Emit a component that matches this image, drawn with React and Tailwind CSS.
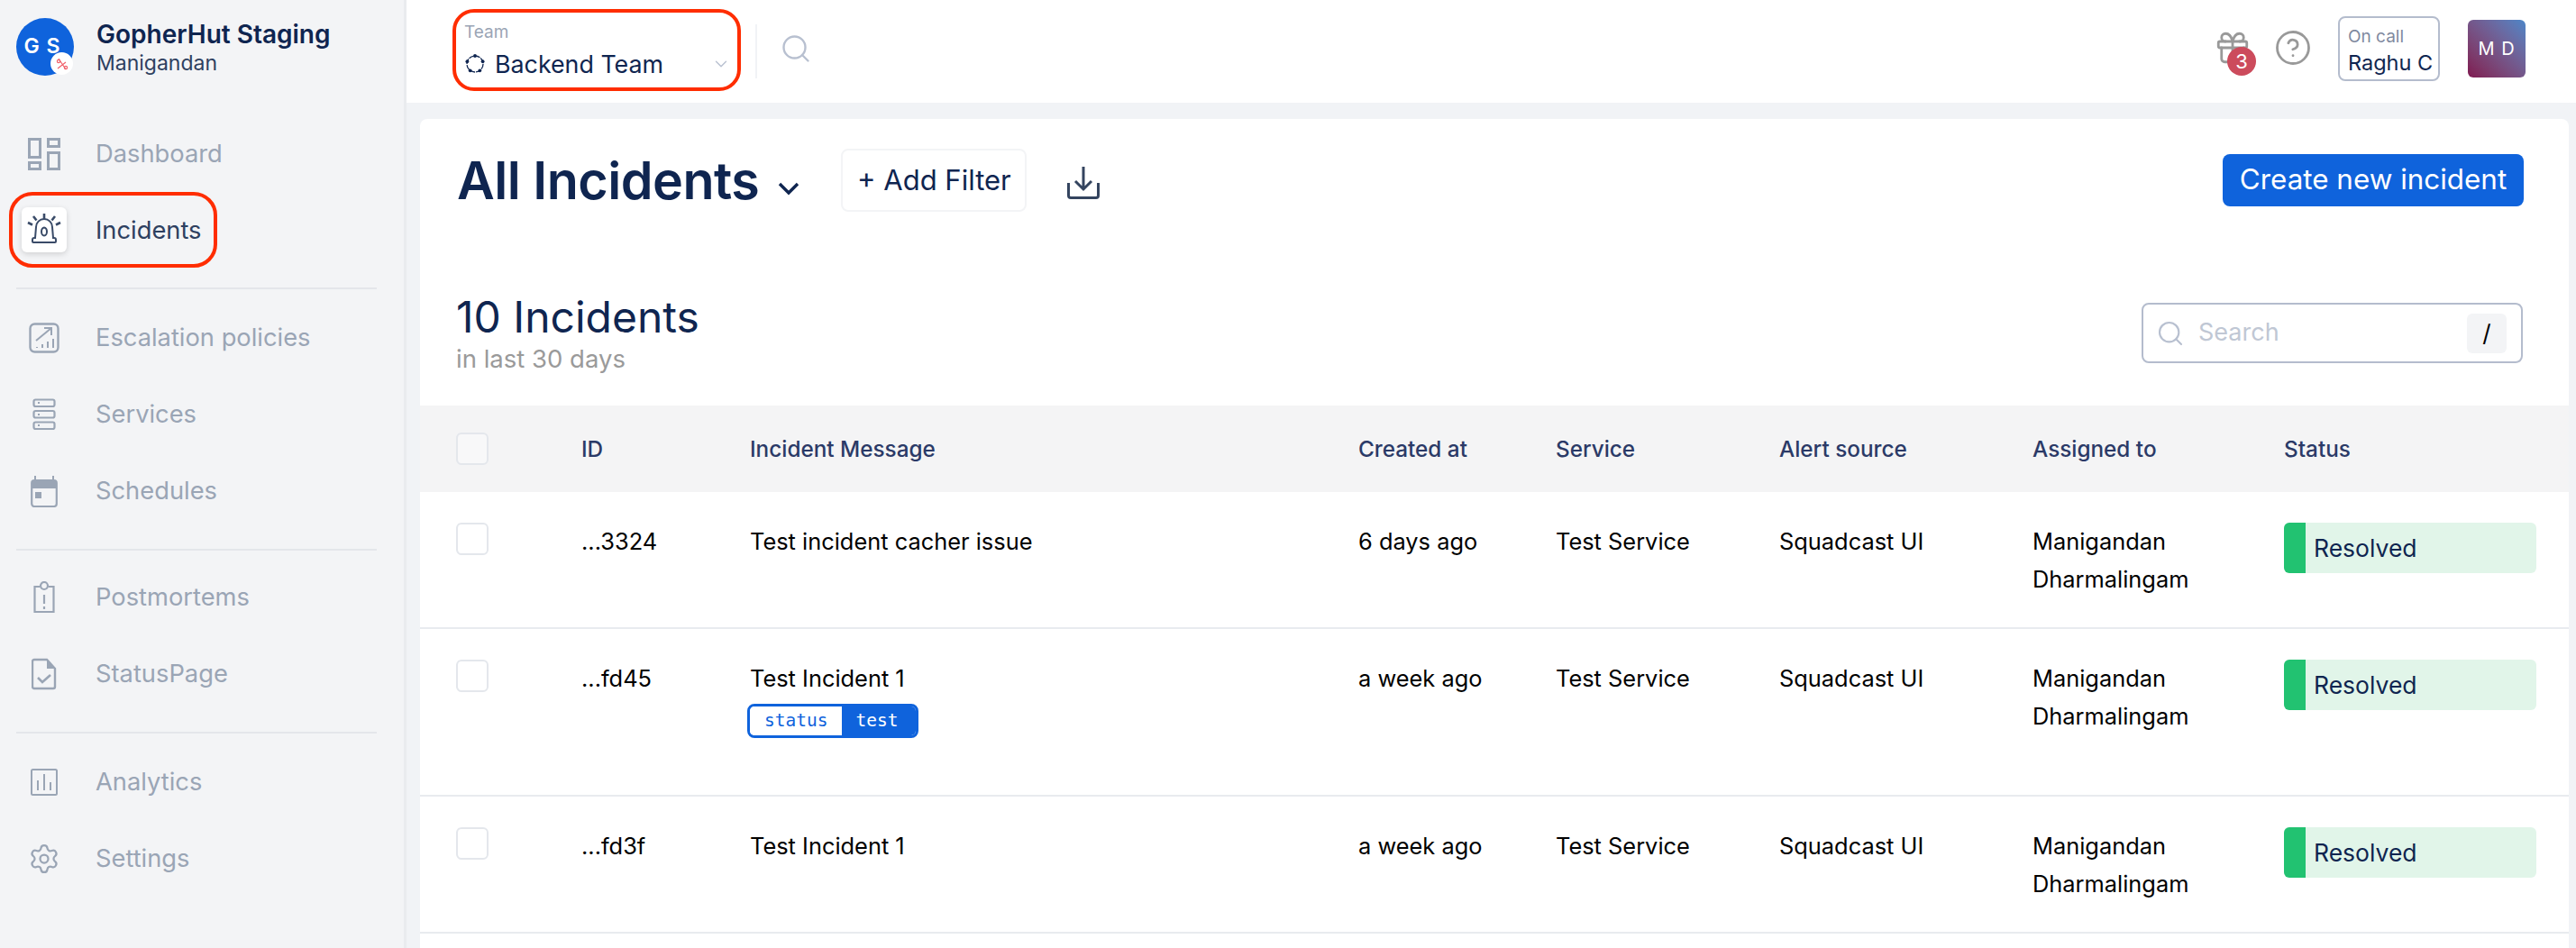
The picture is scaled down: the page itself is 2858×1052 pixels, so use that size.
import React from 'react';
import { Settings, Gift, CircleHelp, Search, ChevronDown } from 'lucide-react';

const DashboardIcon = () => (
  <svg width="38" height="38" viewBox="0 0 38 38" fill="none" stroke="#9aa5b5" strokeWidth="3">
    <rect x="2.5" y="2.5" width="12" height="20" />
    <rect x="23.5" y="2.5" width="12" height="8" />
    <rect x="2.5" y="28.5" width="12" height="7" />
    <rect x="23.5" y="17.5" width="12" height="18" />
  </svg>
);

const AlarmIcon = () => (
  <svg width="38" height="38" viewBox="0 0 38 38" fill="none" stroke="#3a4b68" strokeWidth="2">
    <path d="M7 33 h24 a1 1 0 0 0 1 -1 v-2 a2 2 0 0 0 -2 -2 h-1 l-1 -12 a9 9 0 0 0 -18 0 l-1 12 h-1 a2 2 0 0 0 -2 2 v2 a1 1 0 0 0 1 1 z" />
    <ellipse cx="19" cy="21" rx="3" ry="4.5" />
    <path d="M19 1v6M7 4l3.5 4.5M31 4l-3.5 4.5M1 11l5 2.5M37 11l-5 2.5" strokeWidth="2.6" />
  </svg>
);

const EscalationIcon = () => (
  <svg width="34" height="34" viewBox="0 0 34 34" fill="none" stroke="#9aa5b5" strokeWidth="2.4">
    <rect x="1.5" y="1.5" width="31" height="31" rx="5" />
    <path d="M8 20 L25 6 M17 6 h8 v8" strokeWidth="2" />
    <path d="M9 27v1M15 24v4M21 21v7M27 18v10" strokeWidth="2" />
  </svg>
);

const ServicesIcon = () => (
  <svg width="26" height="36" viewBox="0 0 26 36" fill="none" stroke="#9aa5b5" strokeWidth="2.2">
    <rect x="1.5" y="1.5" width="23" height="7.5" rx="2" />
    <rect x="1.5" y="14" width="23" height="7.5" rx="2" />
    <rect x="1.5" y="26.5" width="23" height="7.5" rx="2" />
    <path d="M6 5h2M6 18h2M6 30h2" />
  </svg>
);

const CalendarIcon = () => (
  <svg width="30" height="36" viewBox="0 0 30 36" fill="none">
    <path d="M5 1v6M25 1v6" stroke="#9aa5b5" strokeWidth="2" />
    <rect x="1.2" y="6" width="27.6" height="29" rx="3" stroke="#9aa5b5" strokeWidth="2.2" />
    <path d="M1 9a3 3 0 0 1 3 -3h22a3 3 0 0 1 3 3v6H1z" fill="#9aa5b5" />
    <rect x="5" y="19" width="7" height="7" fill="#9aa5b5" />
  </svg>
);

const PostmortemIcon = () => (
  <svg width="26" height="36" viewBox="0 0 26 36" fill="none" stroke="#9aa5b5" strokeWidth="2.2">
    <path d="M8 6H2.5v28h21V6H18" />
    <circle cx="13" cy="5" r="4" />
    <path d="M13 15v10M13 28v3" />
  </svg>
);

const StatusIcon = () => (
  <svg width="28" height="36" viewBox="0 0 28 36" fill="none">
    <path d="M3 2h14l9 10v20a2 2 0 0 1 -2 2H3a2 2 0 0 1 -2 -2V4a2 2 0 0 1 2 -2z" stroke="#9aa5b5" strokeWidth="2.4" />
    <path d="M17 2l9 10h-9z" fill="#9aa5b5" />
    <path d="M7 22l5 5 9 -8" stroke="#9aa5b5" strokeWidth="2.6" />
  </svg>
);

const AnalyticsIcon = () => (
  <svg width="30" height="30" viewBox="0 0 30 30" fill="none" stroke="#9aa5b5" strokeWidth="2">
    <rect x="1" y="1" width="28" height="28" rx="1.5" />
    <path d="M8 13v11M15 6v18M22 15v9" />
  </svg>
);

const TeamIcon = () => (
  <svg width="24" height="24" viewBox="0 0 24 24" fill="none" stroke="#0f2550" strokeWidth="1.3">
    <circle cx="12" cy="12" r="9" strokeDasharray="6 1" />
    <g fill="#0f2550" stroke="none">
      <circle cx="12" cy="3" r="1.9" />
      <circle cx="20.6" cy="9.2" r="1.9" />
      <circle cx="17.3" cy="19.3" r="1.9" />
      <circle cx="6.7" cy="19.3" r="1.9" />
      <circle cx="3.4" cy="9.2" r="1.9" />
    </g>
  </svg>
);

const DownloadIcon = () => (
  <svg width="36" height="36" viewBox="0 0 36 36" fill="none" stroke="#34445f" strokeWidth="3">
    <path d="M18 0v24M9 16l9 9 9 -9" />
    <path d="M1.5 18v14a2.5 2.5 0 0 0 2.5 2.5h28a2.5 2.5 0 0 0 2.5 -2.5V18" />
  </svg>
);

const navGroups = [
  [
    { label: 'Dashboard', icon: <DashboardIcon /> },
    { label: 'Incidents', active: true, h: 'h-[84px]' },
  ],
  [
    { label: 'Escalation policies', icon: <EscalationIcon /> },
    { label: 'Services', icon: <ServicesIcon /> },
    { label: 'Schedules', icon: <CalendarIcon /> },
  ],
  [
    { label: 'Postmortems', icon: <PostmortemIcon /> },
    { label: 'StatusPage', icon: <StatusIcon /> },
  ],
  [
    { label: 'Analytics', icon: <AnalyticsIcon /> },
    { label: 'Settings', icon: <Settings size={36} strokeWidth={1.5} color="#9aa5b5" /> },
  ],
];

const incidents = [
  { id: '...3324', message: 'Test incident cacher issue', created: '6 days ago' },
  { id: '...fd45', message: 'Test Incident 1', created: 'a week ago', tag: ['status', 'test'] },
  { id: '...fd3f', message: 'Test Incident 1', created: 'a week ago' },
];

const columns = 'grid grid-cols-[139px_187px_675px_219px_248px_281px_279px_280px]';

const Checkbox = ({ bg }) => (
  <div className={`w-[36px] h-[36px] rounded-[6px] border-2 border-[#e4e7ec] ${bg}`} />
);

const Sidebar = () => (
  <aside className="w-[451px] shrink-0 bg-[#f3f4f6] border-r-[3px] border-[#e9ebee] h-full">
    <div className="flex items-center pl-[18px] h-[128px] pb-[24px]">
      <div className="relative w-[64px] h-[64px] rounded-full bg-[#0f63dc] flex items-center justify-center text-white text-[23px] font-semibold tracking-[1px] pr-[6px] pb-[2px]">
        G S
        <div className="absolute left-[38px] top-[38px] w-[25px] h-[25px] rounded-full bg-white flex items-center justify-center">
          <svg width="14" height="14" viewBox="0 0 14 14" fill="none" stroke="#f0606a" strokeWidth="1.2">
            <path d="M3 1l8 12M11 5L2 12" />
            <circle cx="3" cy="4" r="1.6" />
            <circle cx="11" cy="11" r="1.6" />
          </svg>
        </div>
      </div>
      <div className="ml-[25px]">
        <div className="text-[28px] leading-[36px] font-semibold text-[#0f2550]">GopherHut Staging</div>
        <div className="text-[23px] leading-[28px] text-[#2e4060]">Manigandan</div>
      </div>
    </div>
    {navGroups.map((group, i) => (
      <div key={i}>
        {group.map((item) =>
          item.active ? (
            <div key={item.label} className="ml-[10px] w-[231px] h-[84px] border-[4px] border-[#ff2d00] rounded-[26px] pl-[10px] flex items-center">
              <div className="w-[50px] h-[50px] bg-white rounded-[6px] shadow-[0_2px_6px_rgba(0,0,0,0.15)] flex items-center justify-center">
                <AlarmIcon />
              </div>
              <span className="ml-[32px] pt-[2px] text-[27.3px] text-[#2e4060]">{item.label}</span>
            </div>
          ) : (
            <div key={item.label} className="h-[85px] pl-[24px] flex items-center">
              <div className="w-[50px] flex justify-center">{item.icon}</div>
              <span className="ml-[32px] pt-[2px] text-[27.3px] text-[#9aa5b5]">{item.label}</span>
            </div>
          )
        )}
        {i === 0 && <div className="ml-[18px] w-[400px] h-[2px] bg-[#e4e6ea] mt-[22px] mb-[11px]" />}
        {i === 1 && <div className="ml-[18px] w-[400px] h-[2px] bg-[#e4e6ea] mt-[22px] mb-[9px]" />}
        {i === 2 && <div className="ml-[18px] w-[400px] h-[2px] bg-[#e4e6ea] mt-[22px] mb-[11px]" />}
      </div>
    ))}
  </aside>
);

const TopBar = () => (
  <header className="h-[114px] bg-white flex items-center shrink-0 pl-[51px] pr-[56px]">
    <div className="w-[320px] h-[91px] border-[4px] border-[#ff2d00] rounded-[24px] pl-[9px] pr-[7px] pt-[10px] mt-[-3px]">
      <div className="text-[19px] leading-[24px] text-[#9aa5b5]">Team</div>
      <div className="flex items-center mt-[6px]">
        <TeamIcon />
        <span className="ml-[10px] text-[26.8px] leading-[34px] text-[#0f2550]">Backend Team</span>
        <ChevronDown size={22} strokeWidth={1.5} color="#b8c0d0" className="ml-auto" />
      </div>
    </div>
    <div className="w-[2px] h-[60px] bg-[#f1f3f6] ml-[16px]" />
    <Search size={36} strokeWidth={1.6} color="#b8c0d0" className="ml-[25px] mt-[-6px]" />
    <div className="ml-auto flex items-center">
      <div className="relative mt-[-8px]">
        <Gift size={42} strokeWidth={1.6} color="#999999" />
        <div className="absolute left-[15px] top-[20px] w-[32px] h-[32px] rounded-full bg-[#cc4b5c] text-white text-[22px] flex items-center justify-center">3</div>
      </div>
      <CircleHelp size={42} strokeWidth={1.6} color="#999999" className="ml-[25px] mt-[-8px]" />
      <div className="ml-[29px] w-[113px] h-[72px] border-2 border-[#b4bccd] rounded-[8px] pl-[9px] pt-[7px] mt-[-6px]">
        <div className="text-[19px] leading-[28px] text-[#7f8aa0]">On call</div>
        <div className="text-[23.5px] leading-[30px] text-[#0f2550] whitespace-nowrap">Raghu C</div>
      </div>
      <div className="ml-[31px] w-[64px] h-[64px] rounded-[6px] bg-gradient-to-bl from-[#4a86c8] to-[#7f1650] flex items-center justify-center text-white text-[20px] tracking-[1px] mt-[-6px]">
        M D
      </div>
    </div>
  </header>
);

const Row = ({ item }) => (
  <div className={`${columns} pl-[40px] pt-[34px] pb-[32px] border-b-2 border-[#e8ebef] text-[25.4px] leading-[42px] text-black`}>
    <Checkbox bg="bg-white" />
    <div>{item.id}</div>
    <div>
      <div>{item.message}</div>
      {item.tag && (
        <div className="mt-[7px] mb-[31px] ml-[-3px] inline-flex h-[38px] border-[3px] border-[#0f63dc] rounded-[8px] overflow-hidden font-['DejaVu_Sans_Mono',monospace] text-[19.5px] leading-[32px]">
          <span className="px-[16px] bg-white text-[#0f63dc]">{item.tag[0]}</span>
          <span className="pl-[15px] pr-[20px] bg-[#0f63dc] text-white">{item.tag[1]}</span>
        </div>
      )}
    </div>
    <div>{item.created}</div>
    <div>Test Service</div>
    <div>Squadcast UI</div>
    <div>
      Manigandan
      <br />
      Dharmalingam
    </div>
    <div className="h-[56px] rounded-[6px] bg-[#e1f5e9] flex items-center overflow-hidden">
      <div className="w-[24px] h-full bg-[#22c271]" />
      <span className="ml-[9px] text-[26.5px] text-[#0f2550]">Resolved</span>
    </div>
  </div>
);

const Card = () => (
  <section className="mt-[18px] mr-[8px] ml-[15px] bg-white rounded-t-[8px] flex-1 overflow-hidden">
    <div className="flex items-center pl-[41px] pr-[50px] pt-[33px] h-[103px]">
      <h1 className="text-[57.4px] leading-[70px] font-semibold text-[#0f2550] tracking-[-0.5px] whitespace-nowrap">All Incidents</h1>
      <svg width="24" height="16" viewBox="0 0 24 16" fill="none" stroke="#0f2550" strokeWidth="3.4" className="ml-[21px] mt-[18px]">
        <path d="M2 3l10 10 10 -10" />
      </svg>
      <div className="ml-[46px] w-[206px] h-[70px] border-2 border-[#f3f4f6] rounded-[8px] flex items-center justify-center text-[31px] text-[#0f2550]">
        + Add Filter
      </div>
      <div className="ml-[45px] mt-[6px]">
        <DownloadIcon />
      </div>
      <button className="ml-auto w-[334px] h-[58px] rounded-[8px] bg-[#0f63dc] text-white text-[31.4px]">
        Create new incident
      </button>
    </div>
    <div className="flex justify-between pl-[40px] pr-[51px] mt-[89px] h-[126px]">
      <div>
        <div className="text-[48px] leading-[56px] text-[#0f2550]">10 Incidents</div>
        <div className="text-[27.5px] leading-[36px] text-[#9a9a9a]">in last 30 days</div>
      </div>
      <div className="mt-[12px] w-[423px] h-[67px] border-2 border-[#b4bccd] rounded-[8px] flex items-center pl-[14px] pr-[16px]">
        <Search size={32} strokeWidth={1.6} color="#b8c0d0" />
        <span className="ml-[15px] text-[27px] text-[#c0c7d4]">Search</span>
        <div className="ml-auto w-[44px] h-[44px] rounded-[6px] bg-[#f3f4f6] flex items-center justify-center text-[26px] text-black">/</div>
      </div>
    </div>
    <div className={`${columns} pl-[40px] h-[96px] bg-[#f4f4f5] items-center text-[24.3px] font-medium text-[#2b3a67]`}>
      <Checkbox bg="bg-[#f8f8f9]" />
      <div>ID</div>
      <div>Incident Message</div>
      <div>Created at</div>
      <div>Service</div>
      <div>Alert source</div>
      <div>Assigned to</div>
      <div>Status</div>
    </div>
    {incidents.map((item) => (
      <Row key={item.id} item={item} />
    ))}
  </section>
);

export default function App() {
  return (
    <div className="w-[2858px] h-[1052px] flex overflow-hidden bg-[#f1f3f6] font-['Inter',sans-serif]">
      <Sidebar />
      <main className="flex-1 flex flex-col min-w-0">
        <TopBar />
        <Card />
      </main>
    </div>
  );
}
